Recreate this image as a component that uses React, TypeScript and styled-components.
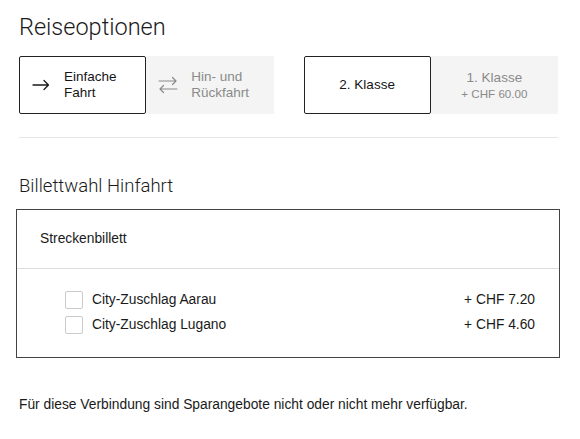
import React from 'react';
import styled, { createGlobalStyle } from 'styled-components';

const GlobalStyle = createGlobalStyle`
  html, body { margin: 0; padding: 0; background: #fff; }
  body { font-family: "Liberation Sans", Arial, sans-serif; color: #1a1a1a; }
  * { box-sizing: border-box; }
`;

const Page = styled.main`
  width: 580px;
  padding: 14px 22px 20px 19px;
`;

const Title = styled.h1`
  margin: 0;
  font-family: Roboto, "Liberation Sans", Arial, sans-serif;
  font-size: 23.5px;
  line-height: 27px;
  font-weight: 300;
  color: #1a1a1a;
`;

const OptionsRow = styled.div`
  margin-top: 15px;
  display: grid;
  grid-template-columns: 1fr 1fr;
  gap: 30px;
`;

const Segmented = styled.div`
  display: grid;
  grid-template-columns: 1fr 1fr;
`;

const Segment = styled.button<{ $active?: boolean; $center?: boolean }>`
  height: 58px;
  margin: 0;
  display: flex;
  align-items: center;
  justify-content: ${(p) => (p.$center ? 'center' : 'flex-start')};
  gap: 13px;
  padding: 0 11px;
  font-family: inherit;
  font-size: 13.5px;
  line-height: 16px;
  text-align: ${(p) => (p.$center ? 'center' : 'left')};
  cursor: pointer;
  background: ${(p) => (p.$active ? '#fff' : '#f4f4f4')};
  color: ${(p) => (p.$active ? '#151515' : '#8a8a8a')};
  border: 1px solid ${(p) => (p.$active ? '#222' : 'transparent')};
  border-radius: ${(p) => (p.$active ? '2px' : '0')};
`;

const Label = styled.span`
  display: flex;
  flex-direction: column;
`;

const Sub = styled.span`
  font-size: 11.6px;
  line-height: 15px;
`;

const Icon = styled.svg`
  flex: none;
  width: 20px;
  height: 20px;
`;

const Divider = styled.hr`
  margin: 23px 0 0;
  border: 0;
  border-top: 1px solid #e6e6e6;
`;

const SectionTitle = styled.h2`
  margin: 37px 0 0;
  font-family: Roboto, "Liberation Sans", Arial, sans-serif;
  font-size: 18.5px;
  line-height: 22px;
  font-weight: 300;
  color: #1a1a1a;
`;

const Card = styled.section`
  margin: 12px -2px 0 -3px;
  border: 1px solid #444;
`;

const CardHeader = styled.div`
  padding: 21px 23px 21px;
  font-size: 13.8px;
  line-height: 16px;
  border-bottom: 1px solid #dedede;
`;

const CardBody = styled.div`
  padding: 22px 24px 23px 48px;
  display: flex;
  flex-direction: column;
  gap: 7px;
`;

const Row = styled.label`
  display: flex;
  align-items: center;
  gap: 9px;
  height: 18px;
  font-size: 13.8px;
  line-height: 16px;
  cursor: pointer;
`;

const Check = styled.input`
  appearance: none;
  margin: 0;
  width: 18px;
  height: 18px;
  border: 1px solid #cbcbcb;
  border-radius: 2px;
  background: #fff;
  flex: none;
`;

const Price = styled.span`
  margin-left: auto;
`;

const Note = styled.p`
  margin: 39px 0 0;
  font-size: 13.8px;
  line-height: 16px;
`;

const ArrowRight = () => (
  <Icon viewBox="0 0 20 20" fill="none" stroke="#1a1a1a" strokeWidth="1.3" strokeLinecap="round" strokeLinejoin="round">
    <path d="M2 10H17.5M13 5.5L17.5 10L13 14.5" />
  </Icon>
);

const ArrowSwap = () => (
  <Icon viewBox="0 0 20 20" fill="none" stroke="#8a8a8a" strokeWidth="1.2" strokeLinecap="round" strokeLinejoin="round">
    <path d="M1 6H18M14.5 2.5L18 6L14.5 9.5" />
    <path d="M19 14H2M5.5 10.5L2 14L5.5 17.5" />
  </Icon>
);

const extras = [
  { name: 'City-Zuschlag Aarau', price: '+ CHF 7.20' },
  { name: 'City-Zuschlag Lugano', price: '+ CHF 4.60' },
];

export default function App() {
  return (
    <>
      <GlobalStyle />
      <Page>
        <Title>Reiseoptionen</Title>
        <OptionsRow>
          <Segmented>
            <Segment $active>
              <ArrowRight />
              <Label>
                <span>Einfache</span>
                <span>Fahrt</span>
              </Label>
            </Segment>
            <Segment>
              <ArrowSwap />
              <Label>
                <span>Hin- und</span>
                <span>Rückfahrt</span>
              </Label>
            </Segment>
          </Segmented>
          <Segmented>
            <Segment $active $center>
              <Label>2. Klasse</Label>
            </Segment>
            <Segment $center>
              <Label>
                <span>1. Klasse</span>
                <Sub>+ CHF 60.00</Sub>
              </Label>
            </Segment>
          </Segmented>
        </OptionsRow>
        <Divider />
        <SectionTitle>Billettwahl Hinfahrt</SectionTitle>
        <Card>
          <CardHeader>Streckenbillett</CardHeader>
          <CardBody>
            {extras.map((e) => (
              <Row key={e.name}>
                <Check type="checkbox" />
                <span>{e.name}</span>
                <Price>{e.price}</Price>
              </Row>
            ))}
          </CardBody>
        </Card>
        <Note>Für diese Verbindung sind Sparangebote nicht oder nicht mehr verfügbar.</Note>
      </Page>
    </>
  );
}
